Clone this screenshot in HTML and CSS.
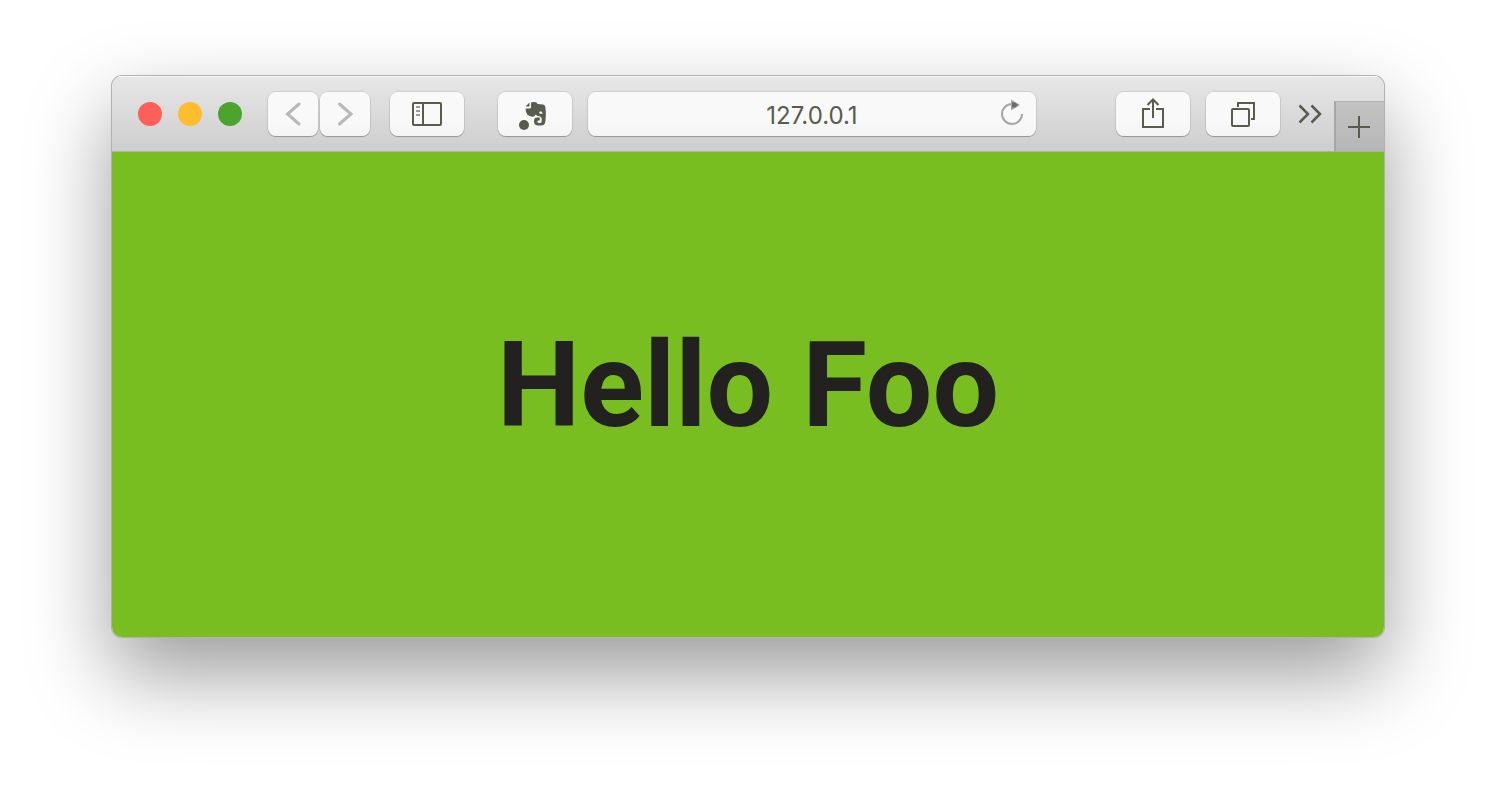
FILE: index.html
```html
<!DOCTYPE html>
<html lang="en">
<head>
    <meta charset="UTF-8">
    <meta name="viewport" content="width=device-width, initial-scale=1.0">
    <title>Hello Foo</title>
    <link rel="stylesheet" href="styles.css">
</head>
<body>
    <div class="window">
        <header class="toolbar">
            <div class="lights">
                <button class="light close" aria-label="Close"></button>
                <button class="light minimize" aria-label="Minimize"></button>
                <button class="light maximize" aria-label="Maximize"></button>
            </div>

            <nav class="history">
                <button class="tool narrow" aria-label="Back">
                    <svg width="50" height="44" viewBox="0 0 50 44"><path class="faded" d="M31 12 L19.500 22 L31 32"/></svg>
                </button>
                <button class="tool narrow" aria-label="Forward">
                    <svg width="50" height="44" viewBox="0 0 50 44"><path class="faded" d="M19.500 12 L31 22 L19.500 32"/></svg>
                </button>
            </nav>

            <button class="tool sidebar-btn" aria-label="Sidebar">
                <svg width="74" height="44" viewBox="0 0 74 44">
                    <rect x="23" y="11" width="28" height="22" rx="1"/>
                    <path d="M33 11v22"/>
                    <path class="lines" d="M26 15h4M26 19h4M26 23h4"/>
                </svg>
            </button>

            <button class="tool clipper-btn" aria-label="Web clipper">
                <svg width="74" height="44" viewBox="0 0 74 44">
                    <path class="solid" d="M27 16.500h4.500q1.500 0 1.500-1.500v-4.500q1-.8 4-.5 2.200.3 2.700 2l5.300.5q2 .3 2.200 2 .8 4 .6 9-.2 6-1 8-.8 2-3.500 2h-3q-4.300 0-4.300-4.500 0-3.500 3-3.500h2.800v3h-1.500q-1 0-1 1 0 1.500 2 1.500h1q1.400 0 1.400-2v-2q0-2-1.500-2.500-3-.2-4.500-2-.8 2.500-3.500 2.300-3-.3-4.700-2-2-2.500-2-6.300z"/>
                    <path class="solid" d="M27.500 14.500 L31.500 10.500 V14 Q31.500 14.500 31 14.500 Z"/>
                    <path class="eye" d="M41 21.500q.3-2.300 1.800-2.300 1.700.2 1.700 2.800-1.800-.9-3.500-.5z"/>
                    <circle class="solid" cx="26" cy="33" r="5"/>
                </svg>
            </button>

            <form class="address">
                <input type="text" value="127.0.0.1" aria-label="Address">
                <button type="button" class="reload" aria-label="Reload">
                    <svg width="48" height="44" viewBox="0 0 48 44">
                        <path class="arc" d="M24 12 A10 10 0 1 0 34 22"/>
                        <path class="arrow" d="M23 7.500 L32 13 L23 18.500 Z"/>
                        <path class="arrow-tip" d="M24 10.500h3l3 2.500-3 2.500h-3z"/>
                    </svg>
                </button>
            </form>

            <div class="actions">
                <button class="tool" aria-label="Share">
                    <svg width="74" height="44" viewBox="0 0 74 44">
                        <path d="M34 17H27V35H47V17H40"/>
                        <path d="M37 26V8M31.500 13 L37 7.500 L42.500 13"/>
                    </svg>
                </button>
                <button class="tool" aria-label="Show all tabs">
                    <svg width="74" height="44" viewBox="0 0 74 44">
                        <rect x="26" y="17" width="17" height="17" rx="1"/>
                        <path d="M32 15V11H48V27H45"/>
                    </svg>
                </button>
            </div>

            <button class="more" aria-label="More">
                <svg width="54" height="44" viewBox="0 0 54 44"><path d="M19.500 13.500 L28 22 L19.500 30.500 M31.500 13.500 L40 22 L31.500 30.500"/></svg>
            </button>
            <button class="new-tab" aria-label="New tab">
                <svg width="48" height="48" viewBox="0 0 48 48"><path d="M23 13V35M12 24H34"/></svg>
            </button>
        </header>

        <main class="page">
            <h1>Hello Foo</h1>
        </main>
    </div>
</body>
</html>
```
FILE: styles.css
```css
* {
    box-sizing: border-box;
}
body {
    margin: 0;
    padding: 76px 112px;
    min-height: 100vh;
    background: white;
    font-family: Inter, "Liberation Sans", sans-serif;
}
.window {
    border-radius: 10px;
    overflow: hidden;
    box-shadow: 0 0 0 1px #b0b0b0, 0 36px 84px rgba(0, 0, 0, 0.4);
}
button {
    padding: 0;
    border: none;
    background: none;
}
svg {
    display: block;
    fill: none;
    stroke: #575c4c;
    stroke-width: 2;
}

/* Toolbar */
.toolbar {
    display: flex;
    align-items: center;
    height: 76px;
    padding-left: 26px;
    background: linear-gradient(#e7e7e7, #cecece);
    border-bottom: 1px solid #b0b0b0;
    box-shadow: inset 0 1px 0 #f6f6f6;
}
.lights {
    display: flex;
    gap: 16px;
    margin-right: 26px;
}
.light {
    width: 24px;
    height: 24px;
    border-radius: 50%;
}
.close {
    background: #fe5f57;
}
.minimize {
    background: #fdbe2e;
}
.maximize {
    background: #4da42c;
}
.history {
    display: flex;
    gap: 2px;
    margin-right: 20px;
}
.tool {
    width: 74px;
    height: 44px;
    flex-shrink: 0;
    border-radius: 8px;
    background: linear-gradient(#f9f9f9 60%, #f4f4f4);
    box-shadow: 0 0 0 1px rgba(0, 0, 0, 0.07), 0 1px 1px rgba(0, 0, 0, 0.25);
}
.narrow {
    width: 50px;
}
.faded {
    stroke: #b8b8b8;
    stroke-width: 3;
    stroke-linecap: round;
}
.lines {
    stroke: #9c9c9c;
}
.solid {
    fill: #575c4c;
    stroke: none;
}
.eye {
    fill: #f9f9f9;
    stroke: none;
}
.sidebar-btn {
    margin-right: 34px;
}
.clipper-btn {
    margin-right: 16px;
}

/* Address field */
.address {
    display: flex;
    flex: 1;
    min-width: 0;
    height: 44px;
    margin-right: 80px;
    padding-left: 48px;
    border-radius: 8px;
    background: linear-gradient(#f9f9f9 60%, #f4f4f4);
    box-shadow: 0 0 0 1px rgba(0, 0, 0, 0.07), 0 1px 1px rgba(0, 0, 0, 0.25);
}
.address input {
    flex: 1;
    min-width: 0;
    padding: 4px 0 0;
    border: none;
    outline: none;
    background: none;
    color: #575c4c;
    font-family: inherit;
    font-size: 24px;
    text-align: center;
}
.arc {
    stroke: #a6a6a6;
}
.arrow {
    fill: #a6a6a6;
    stroke: none;
}
.arrow-tip {
    fill: #6b6e64;
    stroke: none;
}
.actions {
    display: flex;
    gap: 16px;
}
.new-tab {
    align-self: flex-end;
    width: 50px;
    height: 50px;
    background: linear-gradient(#c3c3c3, #b6b6b6);
    border-top: 1px solid #b0b0b0;
    border-left: 2px solid #a6a6a6;
}
.more path {
    stroke-width: 2.500;
}

/* Page content */
.page {
    display: flex;
    align-items: center;
    justify-content: center;
    min-height: 485px;
    padding-bottom: 18px;
    background: #78be20;
}
h1 {
    margin: 0;
    color: #232120;
    font-family: Roboto, sans-serif;
    font-size: 118px;
    line-height: 140px;
    font-weight: 700;
}
```
